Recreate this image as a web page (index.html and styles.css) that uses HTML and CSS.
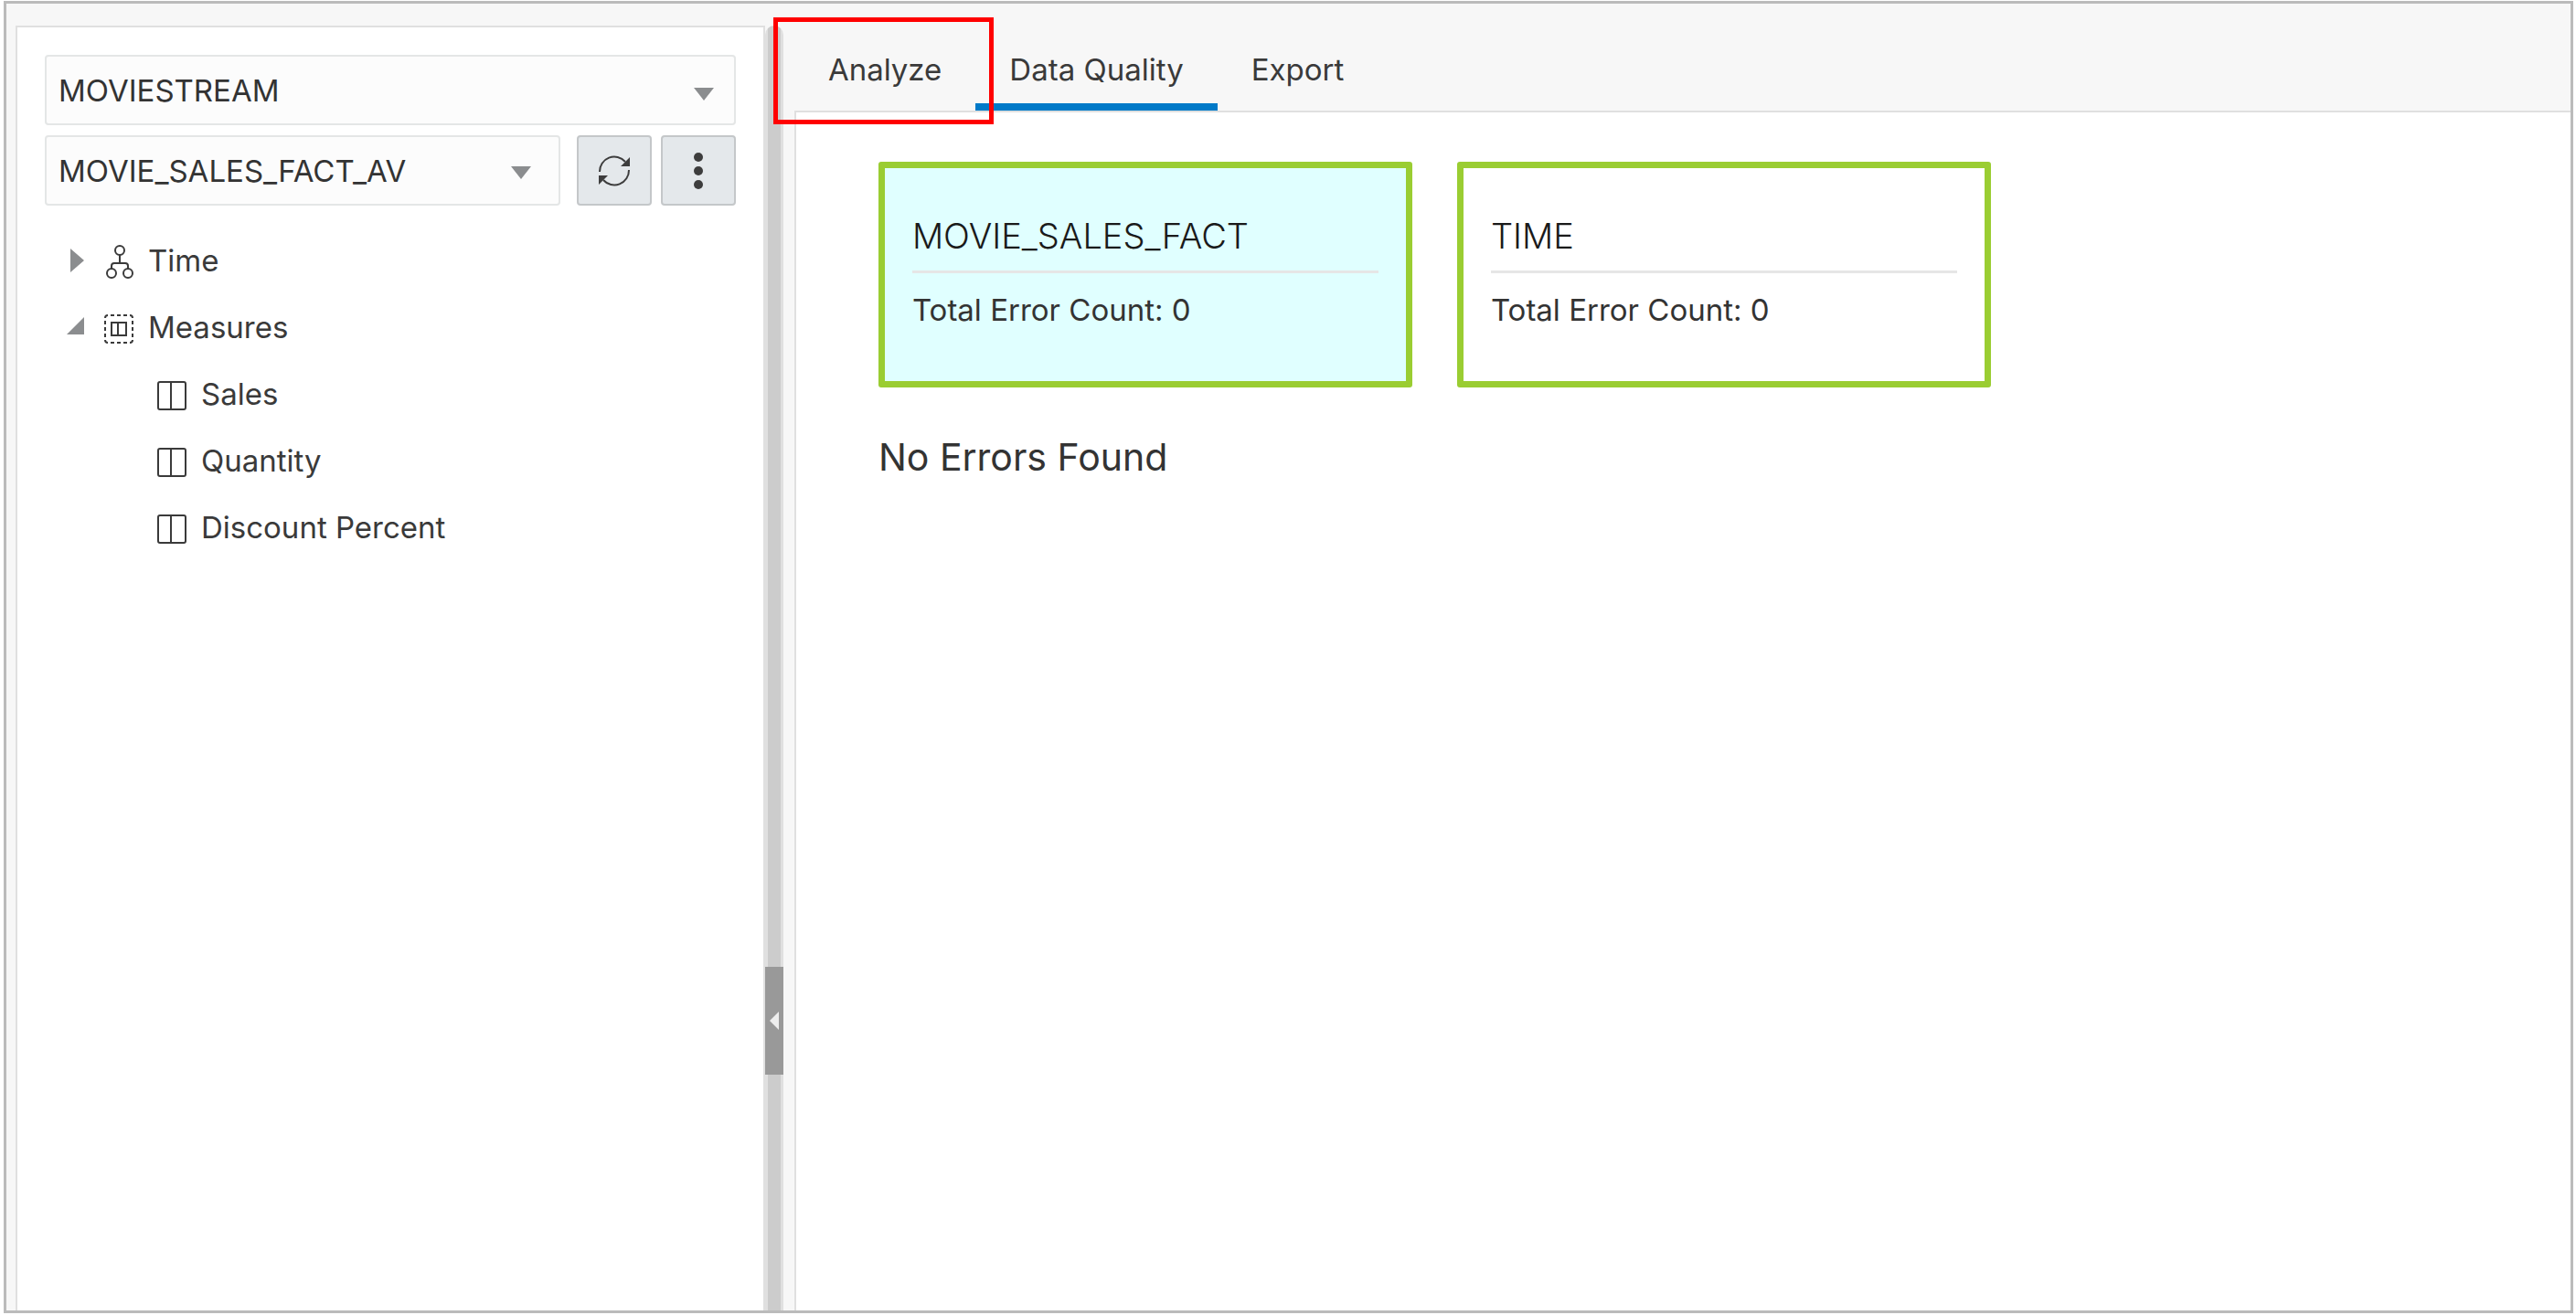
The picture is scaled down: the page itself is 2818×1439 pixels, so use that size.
FILE: index.html
```html
<!DOCTYPE html>
<html lang="en">
<head>
<meta charset="utf-8">
<meta name="viewport" content="width=device-width, initial-scale=1">
<title>Data Quality</title>
<link rel="stylesheet" href="styles.css">
</head>
<body>
<svg class="sprite" aria-hidden="true">
  <symbol id="icon-column" viewBox="0 0 32 32">
    <rect x="1" y="1" width="30" height="30" rx="2" fill="none" stroke="currentColor" stroke-width="2"/>
    <path d="M15 1v30" stroke="currentColor" stroke-width="2"/>
  </symbol>
</svg>
<div class="frame">
  <aside class="sidebar">
    <div class="filters">
      <div class="select">
        <select aria-label="Schema"><option>MOVIESTREAM</option></select>
        <svg class="caret" viewBox="0 0 22 14" aria-hidden="true"><path d="M0 0h22L11 14z"/></svg>
      </div>
      <div class="filter-row">
        <div class="select">
          <select aria-label="Analytic view"><option>MOVIE_SALES_FACT_AV</option></select>
          <svg class="caret" viewBox="0 0 22 14" aria-hidden="true"><path d="M0 0h22L11 14z"/></svg>
        </div>
        <button class="tool" type="button" aria-label="Refresh">
          <svg width="36" height="36" viewBox="0 0 36 36" aria-hidden="true">
            <path d="M2 19A16 16 0 0 1 30 8M34 17A16 16 0 0 1 6 28" fill="none" stroke="currentColor" stroke-width="2"/>
            <path d="M35 3v10H25zM1 33V23h10z" fill="currentColor"/>
          </svg>
        </button>
        <button class="tool" type="button" aria-label="More actions">
          <svg width="12" height="40" viewBox="0 0 12 40" fill="currentColor" aria-hidden="true">
            <circle cx="6" cy="5" r="5"/><circle cx="6" cy="20" r="5"/><circle cx="6" cy="35" r="5"/>
          </svg>
        </button>
      </div>
    </div>
    <ul class="tree">
      <li>
        <div class="node">
          <button class="toggle" type="button" aria-label="Expand Time" aria-expanded="false">
            <svg width="22" height="28" viewBox="0 0 22 28" aria-hidden="true"><path d="M5 1l15 13L5 27z"/></svg>
          </button>
          <svg class="icon" viewBox="0 0 32 38" height="38" fill="none" stroke="currentColor" stroke-width="2" aria-hidden="true">
            <circle cx="17" cy="6" r="5"/><circle cx="8" cy="31" r="5"/><circle cx="26" cy="31" r="5"/>
            <path d="M17 11v9M8 26v-3q0-3 3-3h12q3 0 3 3v3"/>
          </svg>
          <span>Time</span>
        </div>
      </li>
      <li>
        <div class="node">
          <button class="toggle" type="button" aria-label="Collapse Measures" aria-expanded="true">
            <svg width="22" height="28" viewBox="0 0 22 28" aria-hidden="true"><path d="M20 3v19H1z"/></svg>
          </button>
          <svg class="icon" viewBox="0 0 32 32" height="32" fill="none" stroke="currentColor" stroke-width="2" aria-hidden="true">
            <path d="M1 4q0-3 3-3M28 1q3 0 3 3M31 28q0 3-3 3M4 31q-3 0-3-3"/>
            <path d="M7 1h4M14 1h4M21 1h4M7 31h4M14 31h4M21 31h4M1 7v4M1 14v4M1 21v4M31 7v4M31 14v4M31 21v4"/>
            <path d="M8 9h16v14H8zM15 9v14"/>
          </svg>
          <span>Measures</span>
        </div>
        <ul>
          <li class="node leaf"><svg class="icon" height="32" aria-hidden="true"><use href="#icon-column"/></svg><span>Sales</span></li>
          <li class="node leaf"><svg class="icon" height="32" aria-hidden="true"><use href="#icon-column"/></svg><span>Quantity</span></li>
          <li class="node leaf"><svg class="icon" height="32" aria-hidden="true"><use href="#icon-column"/></svg><span>Discount Percent</span></li>
        </ul>
      </li>
    </ul>
  </aside>

  <div class="splitter">
    <button class="splitter-handle" type="button" aria-label="Collapse panel">
      <svg width="10" height="20" viewBox="0 0 10 20" aria-hidden="true"><path d="M10 0v20L0 10z"/></svg>
    </button>
  </div>

  <main class="main">
    <div class="tabs" role="tablist">
      <div class="marked">
        <button class="tab" type="button" role="tab" aria-selected="false">Analyze</button>
      </div>
      <button class="tab" type="button" role="tab" aria-selected="true">Data Quality</button>
      <button class="tab" type="button" role="tab" aria-selected="false">Export</button>
    </div>
    <section class="panel" role="tabpanel" aria-label="Data Quality">
      <div class="cards">
        <button class="card selected" type="button">
          <span class="card-title">MOVIE_SALES_FACT</span>
          <span class="card-text">Total Error Count: 0</span>
        </button>
        <button class="card" type="button">
          <span class="card-title">TIME</span>
          <span class="card-text">Total Error Count: 0</span>
        </button>
      </div>
      <h1 class="result">No Errors Found</h1>
    </section>
  </main>
</div>
</body>
</html>
```
FILE: styles.css
```css
* {
  box-sizing: border-box;
}

body {
  margin: 0;
  min-height: 100vh;
  padding: 1px 3px 2px 4px;
  display: flex;
  background: #fff;
  color: #333;
  font: 33px/44px Inter, "Liberation Sans", sans-serif;
}

button,
select {
  margin: 0;
  padding: 0;
  border: 0;
  background: none;
  color: inherit;
  font: inherit;
}

ul {
  margin: 0;
  padding: 0;
  list-style: none;
}

svg {
  display: block;
  flex: none;
}

.sprite {
  position: absolute;
  width: 0;
  height: 0;
}

.frame {
  flex: 1;
  display: grid;
  grid-template-columns: 13fr 20px 31fr;
  padding-left: 10px;
  border: 3px solid #bbb;
  background: #f7f7f7;
}

/* Sidebar */
.sidebar {
  margin-top: 24px;
  padding: 30px 30px 0;
  border: 2px solid #e0e0e0;
  border-bottom: 0;
  background: #fff;
}

.filters {
  display: grid;
  gap: 11px;
}

.filter-row {
  display: grid;
  grid-template-columns: 1fr 82px 82px;
  column-gap: 10px;
}

.filter-row .select {
  margin-right: 8px;
}

.select {
  display: grid;
  align-items: center;
}

.select > * {
  grid-area: 1 / 1;
}

.select select {
  width: 100%;
  height: 77px;
  padding: 0 72px 0 13px;
  border: 2px solid #e4e6e6;
  border-radius: 4px;
  background: #fcfcfc;
  appearance: none;
}

.caret {
  justify-self: end;
  width: 22px;
  height: 14px;
  margin: 8px 24px 0 0;
  fill: #8b8d8f;
  pointer-events: none;
}

.filter-row .caret {
  margin: 4px 32px 0 0;
}

.tool {
  display: flex;
  align-items: center;
  justify-content: center;
  border: 2px solid #c4c7c9;
  border-radius: 4px;
  background: #e4e8eb;
  color: #3d3d3d;
}

.tree {
  margin-top: 23px;
  color: #3a3a3a;
}

.node {
  display: flex;
  align-items: center;
  height: 73px;
  padding-left: 23px;
}

.node.leaf {
  padding-left: 123px;
}

.toggle {
  margin-right: 20px;
  fill: #8b8d8f;
}

.icon {
  width: 32px;
  margin: 4px 16px 0 0;
}

/* Splitter */
.splitter {
  display: flex;
  flex-direction: column;
  justify-content: flex-end;
  margin-top: 24px;
  border-radius: 10px 10px 0 0;
  background: linear-gradient(to right, #e0e0e0 3px, #ccc 3px, #ccc 17px, #e0e0e0 17px);
}

.splitter-handle {
  display: flex;
  align-items: center;
  justify-content: center;
  height: 118px;
  margin-bottom: 258px;
  background: #999;
  fill: #eee;
}

/* Main area */
.main {
  display: flex;
  flex-direction: column;
  margin-left: 12px;
}

.tabs {
  display: flex;
}

.tab {
  height: 117px;
  padding: 50px 37px 15px;
  border-bottom: 8px solid transparent;
  color: #3a3a3a;
}

.tab[aria-selected="true"] {
  border-bottom-color: #007ac8;
}

.marked {
  position: relative;
}

.marked::after {
  content: "";
  position: absolute;
  inset: 15px -20px -15px -23px;
  border: 5px solid #f00;
  pointer-events: none;
}

.panel {
  flex: 1;
  padding: 54px 90px;
  border: 2px solid #e0e0e0;
  border-width: 2px 0 0 2px;
  background: #fff;
}

.cards {
  display: flex;
  flex-wrap: wrap;
  gap: 49px;
}

.card {
  display: flex;
  flex-direction: column;
  width: 584px;
  height: 247px;
  padding: 50px 30px;
  border: 7px solid #9acd32;
  border-radius: 3px;
  text-align: left;
}

.card.selected {
  background: #e0ffff;
}

.card-title {
  padding-bottom: 14px;
  border-bottom: 3px solid #e6e6e6;
  color: #1a1a1a;
  font-size: 38px;
  font-weight: 300;
  line-height: 48px;
}

.card-text {
  padding-top: 18px;
}

.result {
  margin: 48px 0 0;
  font-size: 41px;
  font-weight: 400;
  line-height: 56px;
}
```
